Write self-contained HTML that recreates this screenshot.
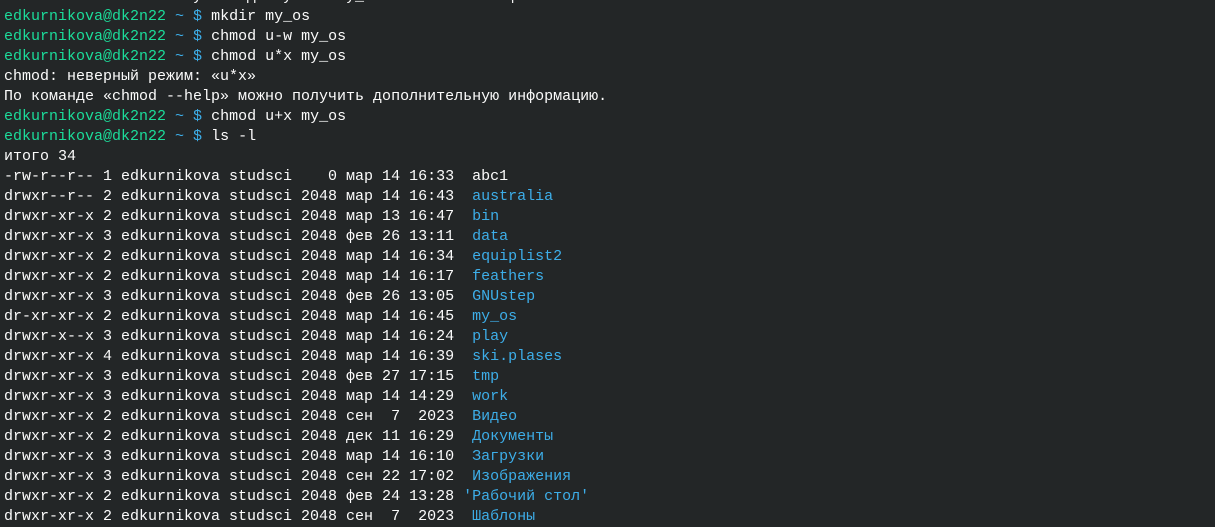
<!DOCTYPE html>
<html><head><meta charset="utf-8"><style>
html,body{margin:0;padding:0;background:#232627;width:1215px;height:524px;overflow:hidden}
pre{margin:0;position:absolute;left:4px;top:-13px;font-family:"Liberation Mono","DejaVu Sans Mono",monospace;font-size:15px;line-height:20px;color:#fcfcfc;white-space:pre}
.g{color:#1cdc9a}.b{color:#3daee9}
</style></head><body><pre>chmod: невозможно получить доступ к 'my_os': Нет такого файла или каталога
<span class="g">edkurnikova@dk2n22</span> <span class="b">~ $</span> mkdir my_os
<span class="g">edkurnikova@dk2n22</span> <span class="b">~ $</span> chmod u-w my_os
<span class="g">edkurnikova@dk2n22</span> <span class="b">~ $</span> chmod u*x my_os
chmod: неверный режим: «u*x»
По команде «chmod --help» можно получить дополнительную информацию.
<span class="g">edkurnikova@dk2n22</span> <span class="b">~ $</span> chmod u+x my_os
<span class="g">edkurnikova@dk2n22</span> <span class="b">~ $</span> ls -l
итого 34
-rw-r--r-- 1 edkurnikova studsci    0 мар 14 16:33  abc1
drwxr--r-- 2 edkurnikova studsci 2048 мар 14 16:43  <span class="b">australia</span>
drwxr-xr-x 2 edkurnikova studsci 2048 мар 13 16:47  <span class="b">bin</span>
drwxr-xr-x 3 edkurnikova studsci 2048 фев 26 13:11  <span class="b">data</span>
drwxr-xr-x 2 edkurnikova studsci 2048 мар 14 16:34  <span class="b">equiplist2</span>
drwxr-xr-x 2 edkurnikova studsci 2048 мар 14 16:17  <span class="b">feathers</span>
drwxr-xr-x 3 edkurnikova studsci 2048 фев 26 13:05  <span class="b">GNUstep</span>
dr-xr-xr-x 2 edkurnikova studsci 2048 мар 14 16:45  <span class="b">my_os</span>
drwxr-x--x 3 edkurnikova studsci 2048 мар 14 16:24  <span class="b">play</span>
drwxr-xr-x 4 edkurnikova studsci 2048 мар 14 16:39  <span class="b">ski.plases</span>
drwxr-xr-x 3 edkurnikova studsci 2048 фев 27 17:15  <span class="b">tmp</span>
drwxr-xr-x 3 edkurnikova studsci 2048 мар 14 14:29  <span class="b">work</span>
drwxr-xr-x 2 edkurnikova studsci 2048 сен  7  2023  <span class="b">Видео</span>
drwxr-xr-x 2 edkurnikova studsci 2048 дек 11 16:29  <span class="b">Документы</span>
drwxr-xr-x 3 edkurnikova studsci 2048 мар 14 16:10  <span class="b">Загрузки</span>
drwxr-xr-x 3 edkurnikova studsci 2048 сен 22 17:02  <span class="b">Изображения</span>
drwxr-xr-x 2 edkurnikova studsci 2048 фев 24 13:28 <span class="b">'Рабочий стол'</span>
drwxr-xr-x 2 edkurnikova studsci 2048 сен  7  2023  <span class="b">Шаблоны</span>
</pre></body></html>
